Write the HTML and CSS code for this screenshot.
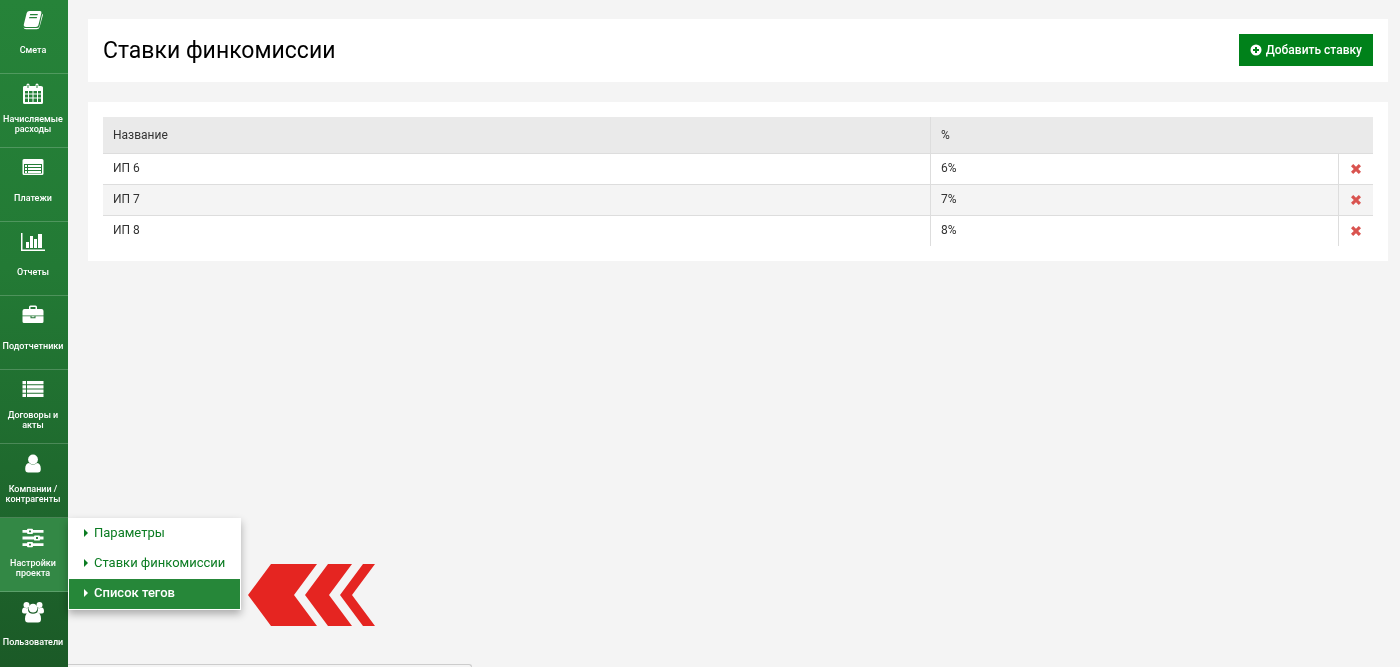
FILE: index.html
```html
<!DOCTYPE html>
<html lang="ru">
<head>
  <meta charset="UTF-8" />
  <meta name="viewport" content="width=device-width, initial-scale=1.0"/>
  <title>Ставки финкомиссии</title>
  <link rel="stylesheet" href="styles.css">
</head>
<body>
  <div class="layout">
    <nav class="sidebar">
      <div class="nav-item">
        <a href="#" class="nav-link">
          <svg class="nav-icon" viewBox="0 0 24 22"><path fill-rule="evenodd" d="M8.500 2H19q1.800.1 1.400 1.900l-3 12.300q-.5 1.800-2.400 1.800H5q-2.600-.2-2.200-2.600L5.700 4Q6.300 2.100 8.500 2zM9.200 5l-.4 1.300h7.700l.4-1.300zM8.400 8L8 9.300h7.700l.4-1.300z"/><path d="M21.200 4.800q.9.500.6 1.700l-3.100 11.200q-.7 2.500-2.900 2.500H5q-2.200-.1-2.500-2 .8.900 2.500.9h10.500q2.300 0 3-2.200z"/></svg>
          <span class="nav-label">Смета</span>
        </a>
      </div>
      <div class="nav-item">
        <a href="#" class="nav-link">
          <svg class="nav-icon" viewBox="0 0 24 22"><path fill-rule="evenodd" d="M3 3h2.500V2q0-1.500 1.500-1.500T8.500 2v1h6V2q0-1.500 1.500-1.500T17.500 2v1H20q2 0 2 1.500v15q0 1.500-1.500 1.500h-17Q2 21 2 19.500v-15Q2 3 3 3zM6.500 2v3h1V2zm9 0v3h1V2zM4 8v2.500h3V8zm4 0v2.500h3.500V8zm4.500 0v2.500H16V8zM17 8v2.500h3V8zM4 11.500v3h3v-3zm4 0v3h3.500v-3zm4.500 0v3H16v-3zm4.500 0v3h3v-3zM4 15.500V19h3v-3.500zm4 0V19h3.500v-3.500zm4.500 0V19H16v-3.500zm4.500 0V19h3v-3.500z"/></svg>
          <span class="nav-label">Начисляемые расходы</span>
        </a>
      </div>
      <div class="nav-item">
        <a href="#" class="nav-link">
          <svg class="nav-icon" viewBox="0 0 24 22"><path fill-rule="evenodd" d="M3 2h18q1.500 0 1.500 1.500v13Q22.500 18 21 18H3q-1.500 0-1.500-1.500v-13Q1.500 2 3 2zm0 5v9q0 .5.500.5h17q.5 0 .5-.5V7z"/><path d="M4 8h2v2H4zm3 0h13v2H7zM4 11h2v2H4zm3 0h13v2H7zM4 14h2v2H4zm3 0h13v2H7z"/></svg>
          <span class="nav-label">Платежи</span>
        </a>
      </div>
      <div class="nav-item">
        <a href="#" class="nav-link">
          <svg class="nav-icon" viewBox="0 0 24 22"><path d="M0 2h1.500v16.500H24V20H0zM5 11h3v6H5zm4-6h3v12H9zm4 3h3v9h-3zm4-5h4v14h-4z"/></svg>
          <span class="nav-label">Отчеты</span>
        </a>
      </div>
      <div class="nav-item">
        <a href="#" class="nav-link">
          <svg class="nav-icon" viewBox="0 0 24 22"><path fill-rule="evenodd" d="M8 4V2q0-1.500 1.500-1.500h5Q16 .5 16 2v2h4.500q2 0 2 2v4.500h-21V6q0-2 2-2zm1.500 0h5V2h-5zM1.500 11.200H9.500v2h5v-2h8v5.300q0 1.500-1.500 1.500H3q-1.500 0-1.500-1.500zm9 0h3v1h-3z"/></svg>
          <span class="nav-label">Подотчетники</span>
        </a>
      </div>
      <div class="nav-item">
        <a href="#" class="nav-link">
          <svg class="nav-icon" viewBox="0 0 24 22"><path d="M1.500 2H5v3.200H1.500zM6 2h16.500v3.200H6zM1.500 6.200H5v3.200H1.500zm4.500 0h16.500v3.200H6zM1.500 10.500H5v3.200H1.500zm4.500 0h16.500v3.200H6zM1.500 14.800H5V18H1.500zm4.500 0h16.500V18H6z"/></svg>
          <span class="nav-label">Договоры и акты</span>
        </a>
      </div>
      <div class="nav-item">
        <a href="#" class="nav-link">
          <svg class="nav-icon" viewBox="0 0 24 22"><circle cx="12" cy="6.500" r="4.900"/><path d="M8 10q4 3.500 8 0 3.800.5 3.800 6 0 3.500-3 3.500H7.200q-3 0-3-3.500Q4.200 10.500 8 10z"/></svg>
          <span class="nav-label">Компании / контрагенты</span>
        </a>
      </div>
      <div class="nav-item active">
        <a href="#" class="nav-link">
          <svg class="nav-icon" viewBox="0 0 24 22"><path fill-rule="evenodd" d="M1.500 3H6q0-1.200 1-1.200h4q1 0 1 1.200h10.500v2.800H12Q12 7 11 7H7Q6 7 6 5.800H1.500zM8 3.500v1.800h2V3.500zM1.500 9.600H13q0-1.200 1-1.200h4q1 0 1 1.200h3.500v2.800H19q0 1.200-1 1.200h-4q-1 0-1-1.200H1.500zm13.500.5v1.800h2v-1.800zM1.500 16.200H6Q6 15 7 15h4q1 0 1 1.200h10.500V19H12q0 1.200-1 1.200H7Q6 20.200 6 19H1.500zm6.500.5v1.800h2v-1.800z"/></svg>
          <span class="nav-label">Настройки проекта</span>
        </a>
        <div class="submenu">
          <a href="#" class="submenu-link">Параметры</a>
          <a href="#" class="submenu-link">Ставки финкомиссии</a>
          <a href="#" class="submenu-link selected">Список тегов</a>
          <svg class="pointer" viewBox="0 0 128 62"><path d="M0 31 23 0h46L46 31l23 31H23zM57 31 80 0h24L81 31l23 31H80zM92 31l23-31h12l-23 31 23 31h-12z"/></svg>
        </div>
      </div>
      <div class="nav-item">
        <a href="#" class="nav-link">
          <svg class="nav-icon" viewBox="0 0 24 22"><circle cx="5.500" cy="4" r="3"/><circle cx="18.500" cy="4" r="3"/><circle cx="12" cy="7.200" r="4.400"/><path d="M3.500 6.500Q5.500 7.700 7 7q-.3 3 1.300 4.800Q6.500 11.500 5.800 12.500H3q-2 0-2-2 0-4 2.500-4zm17 0Q18.500 7.700 17 7q.3 3-1.300 4.800 1.800-.3 2.500.7H21q2 0 2-2 0-4-2.500-4zM8 11.500q4 2.500 8 0 4 .5 4 6.500 0 3.500-3 3.500H7q-3 0-3-3.500 0-6 4-6.500z"/></svg>
          <span class="nav-label">Пользователи</span>
        </a>
      </div>
    </nav>

    <main class="content">
      <header class="panel page-header">
        <h1>Ставки финкомиссии</h1>
        <button type="button" class="add-btn">
          <svg class="add-icon" viewBox="0 0 12 12"><path fill-rule="evenodd" d="M6 .5a5.500 5.500 0 1 1 0 11 5.500 5.500 0 0 1 0-11zM5 3v2H3v2h2v2h2V7h2V5H7V3z"/></svg>
          Добавить ставку
        </button>
      </header>

      <section class="panel">
        <table class="rates">
          <thead>
            <tr>
              <th class="col-name" scope="col">Название</th>
              <th scope="col" colspan="2">%</th>
            </tr>
          </thead>
          <tbody>
            <tr>
              <td>ИП 6</td>
              <td>6%</td>
              <td class="col-delete"><button type="button" class="delete-btn" aria-label="Удалить ИП 6"><svg viewBox="0 0 12 12"><path d="m3.200 1 2.800 2.800L8.800 1 11 3.200 8.200 6 11 8.800 8.800 11 6 8.200 3.200 11 1 8.800 3.800 6 1 3.200z"/></svg></button></td>
            </tr>
            <tr>
              <td>ИП 7</td>
              <td>7%</td>
              <td class="col-delete"><button type="button" class="delete-btn" aria-label="Удалить ИП 7"><svg viewBox="0 0 12 12"><path d="m3.200 1 2.800 2.800L8.800 1 11 3.200 8.200 6 11 8.800 8.800 11 6 8.200 3.200 11 1 8.800 3.800 6 1 3.200z"/></svg></button></td>
            </tr>
            <tr>
              <td>ИП 8</td>
              <td>8%</td>
              <td class="col-delete"><button type="button" class="delete-btn" aria-label="Удалить ИП 8"><svg viewBox="0 0 12 12"><path d="m3.200 1 2.800 2.800L8.800 1 11 3.200 8.200 6 11 8.800 8.800 11 6 8.200 3.200 11 1 8.800 3.800 6 1 3.200z"/></svg></button></td>
            </tr>
          </tbody>
        </table>
      </section>
    </main>
  </div>
  <div class="status-bar"></div>
</body>
</html>
```

FILE: styles.css
```css
* { box-sizing: border-box; }
body {
  margin: 0;
  background: #f4f4f4;
  color: #333;
  font-family: Roboto, "Liberation Sans", sans-serif;
  font-size: 12px;
}
.layout {
  display: flex;
  min-height: 100vh;
}

/* Sidebar */
.sidebar {
  flex: 0 0 68px;
  background: linear-gradient(#268339, #237a35 40%, #1b5a27);
}
.nav-item {
  position: relative;
  border-bottom: 1px solid rgba(255,255,255,0.2);
}
.nav-item:last-child { border-bottom: none; }
.nav-item.active { background: #338845; }
.nav-link {
  display: flex;
  flex-direction: column;
  align-items: center;
  height: 73px;
  padding: 9px 2px 4px 0;
  color: #fff;
  text-decoration: none;
}
.nav-icon {
  flex: none;
  width: 24px;
  height: 22px;
  fill: #fff;
}
.nav-label {
  display: flex;
  align-items: center;
  height: 40px;
  font-size: 9px;
  font-weight: 500;
  line-height: 10px;
  text-align: center;
}

/* Submenu */
.submenu {
  position: absolute;
  top: 0;
  left: 68px;
  width: 173px;
  padding: 1px;
  background: #fff;
  box-shadow: 0 4px 8px rgba(0,0,0,0.3);
  z-index: 10;
}
.submenu-link {
  display: flex;
  align-items: center;
  gap: 6px;
  height: 30px;
  padding: 0 15px 3px;
  color: #0b7c22;
  font-size: 13px;
  white-space: nowrap;
  text-decoration: none;
}
.submenu-link::before {
  content: "";
  border: 4px solid transparent;
  border-left-color: currentColor;
  border-right: none;
}
.submenu-link.selected {
  background: #268739;
  color: #fff;
  font-weight: 500;
}
.pointer {
  position: absolute;
  top: 46px;
  left: 180px;
  width: 128px;
  height: 62px;
  fill: #e52521;
}

/* Content */
.content {
  flex: 1;
  min-width: 0;
  padding: 19px 12px 20px 20px;
}
.panel {
  padding: 15px;
  background: #fff;
}
.page-header {
  display: flex;
  align-items: flex-start;
  justify-content: space-between;
  margin-bottom: 20px;
}
h1 {
  margin: 0;
  color: #000;
  font-size: 23px;
  font-weight: 400;
  line-height: 33px;
}
.add-btn {
  display: flex;
  align-items: center;
  gap: 4px;
  height: 32px;
  padding: 0 11px;
  border: none;
  background: #00811a;
  color: #fff;
  font-family: inherit;
  font-size: 12px;
  font-weight: 500;
  cursor: pointer;
}
.add-icon {
  width: 12px;
  height: 12px;
  fill: #fff;
}

/* Rates table */
.rates {
  width: 100%;
  border-collapse: separate;
  border-spacing: 0;
}
.rates th,
.rates td {
  height: 31px;
  padding: 0 10px;
  border-bottom: 1px solid #ddd;
  text-align: left;
  font-weight: 400;
}
.rates td { padding-bottom: 2px; }
.rates th {
  height: 37px;
  background: #eaeaea;
}
.rates th + th,
.rates td + td { border-left: 1px solid #ddd; }
.rates .col-name { width: 827px; }
.rates tbody tr:nth-child(even) { background: #f4f4f4; }
.rates tbody tr:last-child td {
  height: 30px;
  border-bottom: none;
}
.rates .col-delete {
  width: 35px;
  padding: 0;
  text-align: center;
}
.delete-btn {
  display: flex;
  align-items: center;
  justify-content: center;
  width: 100%;
  height: 28px;
  padding: 0;
  border: none;
  background: none;
  cursor: pointer;
}
.delete-btn svg {
  width: 12px;
  height: 12px;
  fill: #d9534f;
}

.status-bar {
  position: fixed;
  bottom: 0;
  left: 0;
  width: 472px;
  height: 3px;
  border-top: 1px solid #ccc;
  border-right: 1px solid #ccc;
  border-radius: 0 4px 0 0;
  z-index: -1;
}
```
